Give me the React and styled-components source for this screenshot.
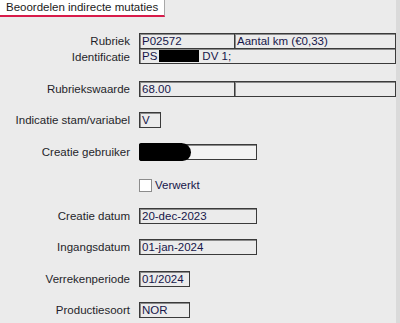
import React from "react";
import styled, { createGlobalStyle } from "styled-components";

const GlobalStyle = createGlobalStyle`
  html, body {
    margin: 0;
    padding: 0;
    background: #ebebeb;
  }
  body {
    font-family: "Liberation Sans", Arial, sans-serif;
    font-size: 11.5px;
    color: #1f1f2a;
  }
`;

const Window = styled.div`
  width: 400px;
  height: 323px;
  background: #ebebeb;
  display: flex;
  flex-direction: column;
  overflow: hidden;
  box-sizing: border-box;
  border-right: 4px solid #dadada;
`;

const TabBar = styled.div`
  display: flex;
  height: 17px;
`;

const Tab = styled.div`
  width: 165px;
  box-sizing: border-box;
  background: #ffffff;
  border-right: 1px solid #a8a8a8;
  border-bottom: 2px solid #d81b4a;
  padding: 0 0 0 6px;
  line-height: 15px;
  font-size: 11.5px;
  color: #1c1c1c;
  white-space: nowrap;
`;

const Form = styled.div`
  display: flex;
  flex-direction: column;
  padding: 16px 0 0 0;
`;

const Row = styled.div`
  display: grid;
  grid-template-columns: 130px 1fr;
  column-gap: 9px;
  align-items: center;
  height: 16px;
  margin-top: ${(p) => p.$gap || 0}px;
`;

const Label = styled.div`
  text-align: right;
  white-space: nowrap;
  color: #1f1f2a;
`;

const Fields = styled.div`
  display: flex;
  height: 16px;
`;

const Field = styled.div`
  box-sizing: border-box;
  height: 16px;
  width: ${(p) => (p.$width ? `${p.$width}px` : "auto")};
  flex: ${(p) => (p.$grow ? 1 : "none")};
  border: 1px solid #3a3a3a;
  box-shadow: inset 1px 1px 0 #8a8a8a;
  background: ${(p) => p.$bg || "#ebebeb"};
  margin-left: ${(p) => (p.$joined ? "-1px" : 0)};
  margin-top: ${(p) => (p.$stacked ? "-1px" : 0)};
  padding: 0 0 0 ${(p) => (p.$flush ? 0 : 2)}px;
  line-height: 14px;
  color: #16164a;
  white-space: nowrap;
  overflow: visible;
  display: flex;
  align-items: center;
`;

const Redact = styled.span`
  display: inline-block;
  flex: none;
  background: #000;
  width: ${(p) => p.$w}px;
  height: ${(p) => p.$h}px;
  border-radius: ${(p) => p.$radius || "0"};
  margin: ${(p) => p.$margin || "0"};
`;

const CheckRow = styled.label`
  display: flex;
  align-items: center;
  gap: 3px;
  color: #16164a;
`;

const Box = styled.span`
  width: 13px;
  height: 13px;
  box-sizing: border-box;
  background: #fff;
  border: 1px solid #8c8c8c;
  display: inline-block;
`;

export default function App() {
  return (
    <>
      <GlobalStyle />
      <Window>
        <TabBar>
          <Tab>Beoordelen indirecte mutaties</Tab>
        </TabBar>
        <Form>
          <Row>
            <Label>Rubriek</Label>
            <Fields>
              <Field $width={96}>P02572</Field>
              <Field $grow $joined>Aantal km (€0,33)</Field>
            </Fields>
          </Row>
          <Row>
            <Label>Identificatie</Label>
            <Fields>
              <Field $grow $stacked>
                PS
                <Redact $w={40} $h={12} $margin="0 3px 0 2px" />
                DV 1;
              </Field>
            </Fields>
          </Row>
          <Row $gap={16}>
            <Label>Rubriekswaarde</Label>
            <Fields>
              <Field $width={96}>68.00</Field>
              <Field $grow $joined></Field>
            </Fields>
          </Row>
          <Row $gap={15}>
            <Label>Indicatie stam/variabel</Label>
            <Fields>
              <Field $width={22}>V</Field>
            </Fields>
          </Row>
          <Row $gap={16}>
            <Label>Creatie gebruiker</Label>
            <Fields>
              <Field $width={118} $bg="#f3f3f3" $flush>
                <Redact $w={52} $h={18} $radius="2px 10px 9px 3px" $margin="0 0 0 -1px" />
              </Field>
            </Fields>
          </Row>
          <Row $gap={17}>
            <Label></Label>
            <CheckRow>
              <Box />
              Verwerkt
            </CheckRow>
          </Row>
          <Row $gap={15}>
            <Label>Creatie datum</Label>
            <Fields>
              <Field $width={118}>20-dec-2023</Field>
            </Fields>
          </Row>
          <Row $gap={15}>
            <Label>Ingangsdatum</Label>
            <Fields>
              <Field $width={118}>01-jan-2024</Field>
            </Fields>
          </Row>
          <Row $gap={16}>
            <Label>Verrekenperiode</Label>
            <Fields>
              <Field $width={51}>01/2024</Field>
            </Fields>
          </Row>
          <Row $gap={15}>
            <Label>Productiesoort</Label>
            <Fields>
              <Field $width={51}>NOR</Field>
            </Fields>
          </Row>
        </Form>
      </Window>
    </>
  );
}
